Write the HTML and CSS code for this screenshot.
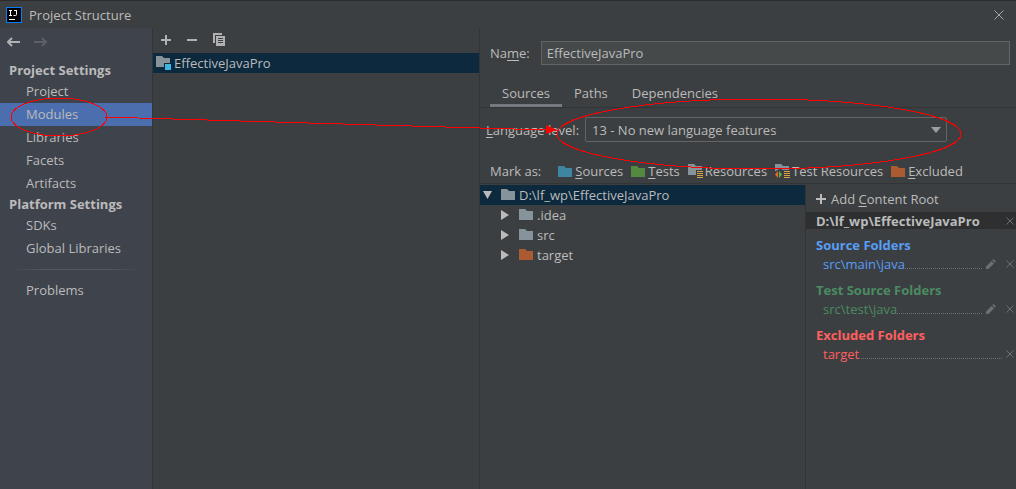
FILE: index.html
```html
<!DOCTYPE html>
<html lang="en">
<head>
<meta charset="utf-8">
<title>Project Structure</title>
<link rel="stylesheet" href="styles.css">
</head>
<body>
<svg class="defs" width="0" height="0" aria-hidden="true">
  <symbol id="folder" viewBox="0 0 14 11"><path d="M0 0h6l2 2h6v9H0z"/></symbol>
  <symbol id="plus" viewBox="0 0 10 10"><path d="M4 0h2v4h4v2H6v4H4V6H0V4h4z"/></symbol>
  <symbol id="cross" viewBox="0 0 8 8"><path d="M.5.5l7 7M7.500 .5l-7 7" fill="none" stroke="currentColor"/></symbol>
  <symbol id="pencil" viewBox="0 0 10 10"><path d="M0 10V7.500L5.500 2 8 4.500 2.500 10zM6.200 1.300L7.500 0 10 2.500 8.700 3.800z"/></symbol>
  <symbol id="lines" viewBox="0 0 6 7"><path fill="#d9a343" d="M0 0h6v1H0zM0 2h6v1H0zM0 4h6v1H0zM0 6h6v1H0z"/></symbol>
</svg>
<div class="window">
  <header class="titlebar">
    <svg class="logo" width="16" height="16" viewBox="0 0 16 16"><path fill="#087cfa" d="M0 0h16v16H0z"/><path fill="#000" d="M1 1h14v14H1z"/><path d="M3 3.500h3M4.500 3.500v5M3 8.500h3M8 3.500h3M10.500 3.500v4q0 1-1 1H7.500M3 12.500h6" fill="none" stroke="#fff"/></svg>
    <h1 class="title">Project Structure</h1>
    <button class="icon-button close" aria-label="Close"><svg width="10" height="10"><path d="M.5.5l9 9M9.500 .5l-9 9" fill="none" stroke="currentColor"/></svg></button>
  </header>
  <div class="body">
    <nav class="sidebar">
      <div class="history">
        <button class="icon-button" aria-label="Back"><svg width="13" height="10"><path d="M1 5h12M5 1L1 5l4 4" fill="none" stroke="currentColor" stroke-width="2"/></svg></button>
        <button class="icon-button dim" aria-label="Forward" disabled><svg width="13" height="10"><path d="M0 5h12M8 1l4 4-4 4" fill="none" stroke="currentColor" stroke-width="2"/></svg></button>
      </div>
      <h2 class="group">Project Settings</h2>
      <a class="item" href="#project">Project</a>
      <a class="item selected" href="#modules">Modules</a>
      <a class="item" href="#libraries">Libraries</a>
      <a class="item" href="#facets">Facets</a>
      <a class="item" href="#artifacts">Artifacts</a>
      <h2 class="group">Platform Settings</h2>
      <a class="item" href="#sdks">SDKs</a>
      <a class="item" href="#global">Global Libraries</a>
      <hr class="divider">
      <a class="item" href="#problems">Problems</a>
    </nav>
    <section class="modules">
      <div class="toolbar">
        <button class="icon-button" aria-label="Add"><svg width="10" height="10"><use href="#plus"/></svg></button>
        <button class="icon-button" aria-label="Remove"><svg width="10" height="10"><path d="M0 4h10v2H0z"/></svg></button>
        <button class="icon-button" aria-label="Copy"><svg width="12" height="13"><path d="M0 0h9v2H2v8H0z"/><path fill-rule="evenodd" d="M3 3h9v10H3zM5 5v1h5V5zM5 7v1h5V7zM5 9v1h5V9z"/></svg></button>
      </div>
      <button class="module">
        <svg width="16" height="14"><path class="grey" d="M0 0h6l2 2h6v5H8v4H0z"/><path fill="#40b6e0" d="M9 8h6v6H9z"/></svg>
        <span>EffectiveJavaPro</span>
      </button>
    </section>
    <main class="details">
      <div class="name-row">
        <label for="name">Na<u>m</u>e:</label>
        <input id="name" class="name-input" type="text" value="EffectiveJavaPro">
      </div>
      <div class="tabs" role="tablist">
        <button class="tab active" role="tab" aria-selected="true">Sources</button>
        <button class="tab" role="tab" aria-selected="false">Paths</button>
        <button class="tab" role="tab" aria-selected="false">Dependencies</button>
      </div>
      <div class="level-row">
        <label for="level"><u>L</u>anguage level:</label>
        <div class="combo">
          <select id="level" class="combo-select"><option>13 - No new language features</option></select>
          <svg class="combo-arrow" width="10" height="6"><path d="M0 0h10L5 6z"/></svg>
        </div>
      </div>
      <div class="mark-row">
        <span class="mark-label">Mark as:</span>
        <button class="mark"><svg class="blue" width="14" height="11"><use href="#folder"/></svg><span><u>S</u>ources</span></button>
        <button class="mark"><svg class="green" width="14" height="11"><use href="#folder"/></svg><span><u>T</u>ests</span></button>
        <button class="mark badged"><svg width="15" height="14"><path class="grey" d="M0 0h6l2 2h6v4H8v5H0z"/><use href="#lines" x="9" y="7" width="6" height="7"/></svg><span>Resources</span></button>
        <button class="mark badged"><svg width="15" height="14"><path class="grey" d="M0 0h6l2 2h6v4H8L6 5H4L1 7H0z"/><path fill="#f26522" d="M3 7v7L0 10.500z"/><path fill="#62b543" d="M4 7v7l3-3.500z"/><use href="#lines" x="9" y="7" width="6" height="7"/></svg><span>Test Resources</span></button>
        <button class="mark"><svg class="orange" width="14" height="11"><use href="#folder"/></svg><span><u>E</u>xcluded</span></button>
      </div>
      <div class="split">
        <div class="tree" role="tree">
          <div class="node root" role="treeitem" aria-expanded="true"><svg class="toggle" width="9" height="8"><path d="M0 0h9L4.500 8z"/></svg><svg class="grey" width="14" height="11"><use href="#folder"/></svg><span>D:\lf_wp\EffectiveJavaPro</span></div>
          <div class="node" role="treeitem"><svg class="toggle" width="9" height="10"><path d="M0 0l8 5-8 5z"/></svg><svg class="grey" width="14" height="11"><use href="#folder"/></svg><span>.idea</span></div>
          <div class="node" role="treeitem"><svg class="toggle" width="9" height="10"><path d="M0 0l8 5-8 5z"/></svg><svg class="grey" width="14" height="11"><use href="#folder"/></svg><span>src</span></div>
          <div class="node" role="treeitem"><svg class="toggle" width="9" height="10"><path d="M0 0l8 5-8 5z"/></svg><svg class="orange" width="14" height="11"><use href="#folder"/></svg><span>target</span></div>
        </div>
        <aside class="roots">
          <button class="add-root"><svg width="10" height="10"><use href="#plus"/></svg><span>Add <u>C</u>ontent Root</span></button>
          <div class="root-path"><strong>D:\lf_wp\EffectiveJavaPro</strong><button class="icon-button faint" aria-label="Remove root"><svg width="8" height="8"><use href="#cross"/></svg></button></div>
          <section class="folders source">
            <h3 class="folders-title">Source Folders</h3>
            <div class="folder-row"><span>src\main\java</span><i class="leader"></i><button class="icon-button faint" aria-label="Edit"><svg width="10" height="10"><use href="#pencil"/></svg></button><button class="icon-button faint" aria-label="Remove"><svg width="8" height="8"><use href="#cross"/></svg></button></div>
          </section>
          <section class="folders test">
            <h3 class="folders-title">Test Source Folders</h3>
            <div class="folder-row"><span>src\test\java</span><i class="leader"></i><button class="icon-button faint" aria-label="Edit"><svg width="10" height="10"><use href="#pencil"/></svg></button><button class="icon-button faint" aria-label="Remove"><svg width="8" height="8"><use href="#cross"/></svg></button></div>
          </section>
          <section class="folders excluded">
            <h3 class="folders-title">Excluded Folders</h3>
            <div class="folder-row"><span>target</span><i class="leader"></i><button class="icon-button faint" aria-label="Remove"><svg width="8" height="8"><use href="#cross"/></svg></button></div>
          </section>
        </aside>
      </div>
    </main>
  </div>
  <svg class="annotation" width="1016" height="180" aria-hidden="true">
    <g fill="none" stroke="#f00" shape-rendering="crispEdges"><ellipse cx="59" cy="117" rx="48" ry="19"/><ellipse cx="759" cy="134" rx="202" ry="35"/><path d="M104 117L548 130"/></g>
    <path fill="#f00" d="M546 125l11 5-11 4z"/>
  </svg>
</div>
</body>
</html>
```
FILE: styles.css
```css
* { box-sizing: border-box; }
body {
  margin: 0;
  background: #3c3f41;
  color: #bbbbbb;
  font: 13px/20px "Open Sans", "Noto Sans", sans-serif;
}
svg { display: block; flex: none; fill: currentColor; }
.defs { position: absolute; }
button, input, select { font: inherit; color: inherit; margin: 0; }
button { display: flex; align-items: center; padding: 0; border: 0; background: none; white-space: nowrap; }
h1, h2, h3 { margin: 0; font-size: inherit; }
u { text-underline-offset: 2px; }
.window { position: relative; display: flex; flex-direction: column; min-height: 100vh; border-top: 1px solid #2b2b2b; }
.titlebar { display: flex; align-items: center; gap: 7px; height: 27px; padding: 0 12px 0 6px; }
.title { flex: 1; font-weight: 400; }
.icon-button { color: #afb1b3; }
.close { color: #a6a8aa; }
.dim { color: #5c6064; }
.faint { color: #6c6f71; }
.body { display: flex; flex: 1; }

.sidebar { flex: none; width: 153px; background: #3f434c; border-right: 1px solid #323435; }
.history { display: flex; gap: 14px; height: 33px; padding: 9px 7px; align-items: start; }
.group { height: 19px; padding-left: 9px; line-height: 19px; }
.item { display: block; padding-left: 26px; line-height: 23px; color: inherit; text-decoration: none; }
.selected { background: #4b6eaf; }
.divider { height: 1px; margin: 9px 8px; border: 0; background: linear-gradient(90deg, transparent, #55585c 25%, #55585c 75%, transparent); }

.modules { flex: 326 1 0; min-width: 0; border-right: 1px solid #323435; }
.toolbar { display: flex; align-items: center; gap: 16px; height: 25px; padding: 0 8px 2px; }
.module { width: 100%; height: 20px; gap: 2px; padding-left: 3px; background: #0d293e; }
.grey { color: #87939a; fill: #87939a; }
.blue { color: #3e86a0; }
.green { color: #538a3f; }
.orange { color: #ac5a30; }

.details { display: flex; flex-direction: column; flex: 536 1 0; min-width: 0; }
.name-row { display: flex; align-items: center; gap: 11px; padding: 13px 6px 0 10px; }
.name-input { flex: 1; min-width: 0; height: 24px; padding: 0 5px; border: 1px solid #646464; background: #45494a; outline: 0; }
.tabs { display: flex; height: 43px; padding: 14px 10px 0; border-bottom: 1px solid #323435; }
.tab { padding: 0 12px; }
.active { box-shadow: inset 0 -3px #747a80; }
.level-row { display: flex; align-items: center; gap: 6px; padding: 9px 69px 0 6px; }
.combo { display: grid; flex: 1; min-width: 0; align-items: center; }
.combo-select { grid-area: 1 / 1; width: 100%; height: 25px; padding: 0 6px; appearance: none; border: 1px solid #646464; border-radius: 2px; background: #3c3f41; }
.combo-arrow { grid-area: 1 / 1; justify-self: end; margin-right: 6px; color: #9da0a2; pointer-events: none; }
.mark-row { display: flex; align-items: center; gap: 8px; height: 42px; padding: 17px 10px 0; border-bottom: 1px solid #323435; }
.mark-label { margin-right: 9px; }
.mark { gap: 3px; }
.badged { gap: 2px; }
.split { display: flex; flex: 1; padding-top: 1px; }
.tree { flex: 325 1 0; min-width: 0; }
.node { display: flex; align-items: center; gap: 4px; height: 20px; padding: 0 0 1px 21px; }
.node .toggle { margin-right: 5px; }
.root { padding-left: 3px; background: #0d293e; }
.roots { flex: 210 1 0; min-width: 0; border-left: 1px solid #323435; }
.add-root { gap: 5px; height: 27px; padding-left: 10px; }
.root-path { display: flex; align-items: center; justify-content: space-between; height: 17px; padding: 0 2px 0 10px; background: #2d2f31; }
.folders { height: 45px; padding-top: 7px; }
.folders-title { padding-left: 10px; line-height: 19px; }
.folder-row { display: flex; align-items: center; gap: 10px; height: 18px; padding: 0 2px 0 17px; }
.leader { flex: 1; align-self: end; height: 5px; margin: 0 -6px 0 -10px; border-top: 1px dotted #6c6f71; }
.source { color: #589df6; }
.test { color: #4a8b62; }
.excluded { color: #ff5f5f; }
.annotation { position: absolute; top: -1px; left: 0; pointer-events: none; }
```
